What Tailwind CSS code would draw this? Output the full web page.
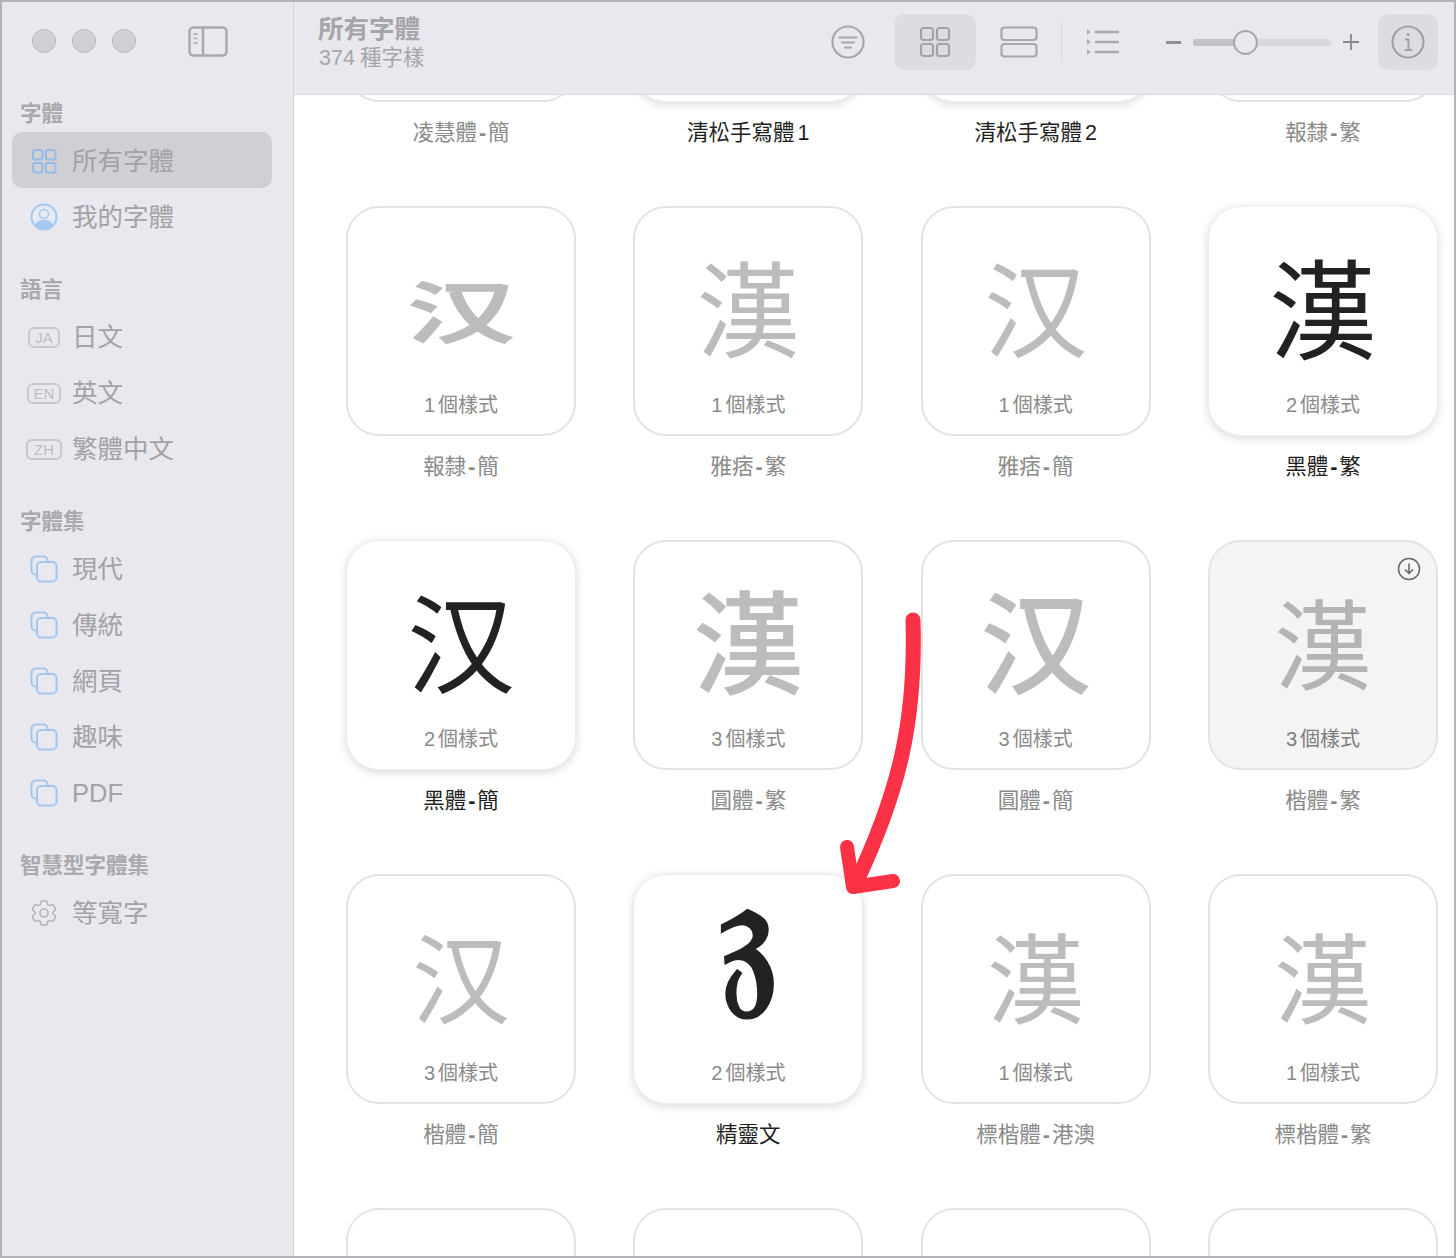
<!DOCTYPE html>
<html lang="zh-Hant">
<head>
<meta charset="UTF-8">
<title>字體</title>
<script src="https://cdn.jsdelivr.net/npm/@tailwindcss/browser@4"></script>
</head>
<body class="bg-white font-['Liberation_Sans','Noto_Sans_CJK_TC',sans-serif]">
<div class="relative flex h-[1258px] w-[1456px] overflow-hidden border-2 border-[#b2b2b8] bg-white">

  <!-- sidebar -->
  <aside class="w-[292px] shrink-0 border-r border-[#d2d2d7] bg-[#e8e8ee] text-[#a2a2a7]">
    <div class="flex h-[90px] items-start pl-[30px] pt-[27px]">
      <span class="size-6 rounded-full border border-[#b6b6bb] bg-[#d0d0d5]"></span>
      <span class="ml-4 size-6 rounded-full border border-[#b6b6bb] bg-[#d0d0d5]"></span>
      <span class="ml-4 size-6 rounded-full border border-[#b6b6bb] bg-[#d0d0d5]"></span>
      <svg class="ml-[52px] -mt-[3px] h-[31px] w-[40px]" viewBox="0 0 40 31" fill="none" stroke="#a8a8ad" stroke-width="2.4">
        <rect x="1.5" y="1.5" width="37" height="28" rx="4"/><path d="M15 1.5v28"/>
        <path d="M5.5 8h4M5.5 12.500h4M5.500 17h4" stroke-width="1.600"/>
      </svg>
    </div>

    <h2 class="flex h-10 items-center pl-[18px] pt-[4px] text-[21.500px] font-bold text-[#a9a9ae]">字體</h2>
    <div class="mx-[10px] mb-px flex h-14 w-[260px] items-center rounded-[10px] bg-[#cfcfd4] pl-1 pt-[2px] text-[25.500px]">
      <span class="flex w-14 justify-center">
        <svg class="size-[26px]" viewBox="0 0 26 26" fill="none" stroke="#94bbe8" stroke-width="2"><rect x="2" y="2" width="9.500" height="9.500" rx="2"/><rect x="15" y="2" width="9.500" height="9.500" rx="2"/><rect x="2" y="15" width="9.500" height="9.500" rx="2"/><rect x="15" y="15" width="9.500" height="9.500" rx="2"/></svg>
      </span>所有字體
    </div>
    <div class="mx-[10px] mb-6 flex h-14 w-[260px] items-center pl-1 text-[25.500px]">
      <span class="flex w-14 justify-center">
        <svg class="size-[28px]" viewBox="0 0 28 28"><circle cx="14" cy="14" r="12.500" fill="#e6ebf3" stroke="#a3c9f1" stroke-width="2"/><circle cx="14" cy="11" r="4.500" fill="#e6ebf3" stroke="#a3c9f1" stroke-width="1.500"/><path d="M5 22c2-4 5-5 9-5s7 1 9 5c-2 3-5.500 5-9 5s-7-2-9-5z" fill="#a3c9f1"/></svg>
      </span>我的字體
    </div>

    <h2 class="flex h-10 items-center pl-[18px] pt-[2px] text-[21.500px] font-bold text-[#a9a9ae]">語言</h2>
    <div class="mx-[10px] flex h-14 items-center pl-1 text-[25.500px]">
      <span class="flex w-14 justify-center"><span class="flex h-[21px] w-8 items-center justify-center rounded-[6px] border-2 border-[#c8c8cd] text-[15px] leading-none text-[#bdbdc2]">JA</span></span>日文
    </div>
    <div class="mx-[10px] flex h-14 items-center pl-1 text-[25.500px]">
      <span class="flex w-14 justify-center"><span class="flex h-[21px] w-[34px] items-center justify-center rounded-[6px] border-2 border-[#c8c8cd] text-[15px] leading-none text-[#bdbdc2]">EN</span></span>英文
    </div>
    <div class="mx-[10px] mb-6 flex h-14 items-center pl-1 text-[25.500px]">
      <span class="flex w-14 justify-center"><span class="flex h-[21px] w-[36px] items-center justify-center rounded-[6px] border-2 border-[#c8c8cd] text-[15px] leading-none text-[#bdbdc2]">ZH</span></span>繁體中文
    </div>

    <h2 class="flex h-10 items-center pl-[18px] pt-[2px] text-[21.500px] font-bold text-[#a9a9ae]">字體集</h2>
    <div class="mx-[10px] flex h-14 items-center pl-1 text-[25.500px]">
      <span class="flex w-14 justify-center"><svg class="size-[28px]" viewBox="0 0 28 28" fill="none" stroke="#a3c7ef" stroke-width="2"><path d="M6 19.500h-.500a4 4 0 0 1-4-4V5.500a4 4 0 0 1 4-4h8a4 4 0 0 1 4 4V6"/><rect x="7" y="7" width="19.500" height="19.500" rx="4"/></svg></span>現代
    </div>
    <div class="mx-[10px] flex h-14 items-center pl-1 text-[25.500px]">
      <span class="flex w-14 justify-center"><svg class="size-[28px]" viewBox="0 0 28 28" fill="none" stroke="#a3c7ef" stroke-width="2"><path d="M6 19.500h-.500a4 4 0 0 1-4-4V5.500a4 4 0 0 1 4-4h8a4 4 0 0 1 4 4V6"/><rect x="7" y="7" width="19.500" height="19.500" rx="4"/></svg></span>傳統
    </div>
    <div class="mx-[10px] flex h-14 items-center pl-1 text-[25.500px]">
      <span class="flex w-14 justify-center"><svg class="size-[28px]" viewBox="0 0 28 28" fill="none" stroke="#a3c7ef" stroke-width="2"><path d="M6 19.500h-.500a4 4 0 0 1-4-4V5.500a4 4 0 0 1 4-4h8a4 4 0 0 1 4 4V6"/><rect x="7" y="7" width="19.500" height="19.500" rx="4"/></svg></span>網頁
    </div>
    <div class="mx-[10px] flex h-14 items-center pl-1 text-[25.500px]">
      <span class="flex w-14 justify-center"><svg class="size-[28px]" viewBox="0 0 28 28" fill="none" stroke="#a3c7ef" stroke-width="2"><path d="M6 19.500h-.500a4 4 0 0 1-4-4V5.500a4 4 0 0 1 4-4h8a4 4 0 0 1 4 4V6"/><rect x="7" y="7" width="19.500" height="19.500" rx="4"/></svg></span>趣味
    </div>
    <div class="mx-[10px] mb-6 flex h-14 items-center pl-1 text-[25.500px]">
      <span class="flex w-14 justify-center"><svg class="size-[28px]" viewBox="0 0 28 28" fill="none" stroke="#a3c7ef" stroke-width="2"><path d="M6 19.500h-.500a4 4 0 0 1-4-4V5.500a4 4 0 0 1 4-4h8a4 4 0 0 1 4 4V6"/><rect x="7" y="7" width="19.500" height="19.500" rx="4"/></svg></span>PDF
    </div>

    <h2 class="flex h-10 items-center pl-[18px] pt-[2px] text-[21.500px] font-bold text-[#a9a9ae]">智慧型字體集</h2>
    <div class="mx-[10px] flex h-14 items-center pl-1 text-[25.500px]">
      <span class="flex w-14 justify-center"><svg class="size-[32px]" viewBox="0 0 24 24" fill="none" stroke="#b4b4b9" stroke-width="1.200"><path d="M9.594 3.940c.09-.542.56-.94 1.110-.94h2.593c.55 0 1.020.398 1.110.94l.213 1.281c.063.374.313.686.645.870.074.040.147.083.22.127.325.196.72.257 1.075.124l1.217-.456a1.125 1.125 0 0 1 1.370.49l1.296 2.247a1.125 1.125 0 0 1-.26 1.431l-1.003.827c-.293.241-.438.613-.43.992a7.723 7.723 0 0 1 0 .255c-.008.378.137.75.43.991l1.004.827c.424.35.534.955.26 1.430l-1.298 2.247a1.125 1.125 0 0 1-1.369.491l-1.217-.456c-.355-.133-.75-.072-1.076.124a6.470 6.470 0 0 1-.22.128c-.331.183-.581.495-.644.869l-.213 1.281c-.09.543-.56.94-1.110.94h-2.594c-.55 0-1.019-.398-1.110-.94l-.213-1.281c-.062-.374-.312-.686-.644-.87a6.520 6.520 0 0 1-.22-.127c-.325-.196-.72-.257-1.076-.124l-1.217.456a1.125 1.125 0 0 1-1.369-.49l-1.297-2.247a1.125 1.125 0 0 1 .26-1.431l1.004-.827c.292-.24.437-.613.43-.991a6.932 6.932 0 0 1 0-.255c.007-.38-.138-.751-.43-.992l-1.004-.827a1.125 1.125 0 0 1-.26-1.430l1.297-2.247a1.125 1.125 0 0 1 1.370-.491l1.216.456c.356.133.751.072 1.076-.124.072-.044.146-.086.22-.128.332-.183.582-.495.644-.869l.214-1.280Z"/><circle cx="12" cy="12" r="3"/></svg></span>等寬字
    </div>
  </aside>

  <div class="flex min-w-0 flex-1 flex-col">
    <!-- toolbar -->
    <header class="z-10 flex h-[93px] shrink-0 items-start justify-between border-b border-[#d9d9de] bg-[#e8e8ee] pl-6 pr-4 pt-3">
      <div class="text-[#a5a5aa]">
        <div class="h-[30px] text-[25.500px] font-bold leading-[30px]">所有字體</div>
        <div class="flex h-7 items-center text-[21.500px] leading-7"><span class="mr-[5px] ml-px">374</span>種字樣</div>
      </div>
      <div class="flex h-14 items-center">
        <svg class="size-[34px]" viewBox="0 0 34 34" fill="none" stroke="#a6a6ab" stroke-width="2.200"><circle cx="17" cy="17" r="15.500"/><path d="M8.500 12.500h17M11 17.500h12M14 22.500h6" stroke-linecap="round"/></svg>
        <span class="ml-[29px] flex h-14 w-[82px] items-center justify-center rounded-[10px] bg-[#dcdce1]">
          <svg class="size-[32px]" viewBox="0 0 32 32" fill="none" stroke="#a2a2a7" stroke-width="2.200"><rect x="2" y="2" width="12" height="12" rx="2.500"/><rect x="18" y="2" width="12" height="12" rx="2.500"/><rect x="2" y="18" width="12" height="12" rx="2.500"/><rect x="18" y="18" width="12" height="12" rx="2.500"/></svg>
        </span>
        <svg class="ml-6 h-[32px] w-[38px]" viewBox="0 0 38 32" fill="none" stroke="#a6a6ab" stroke-width="2.200"><rect x="1.500" y="1.500" width="35" height="12.500" rx="3"/><rect x="1.500" y="18" width="35" height="12.500" rx="3"/></svg>
        <span class="ml-[23px] h-10 w-px bg-[#d7d7dc]"></span>
        <svg class="ml-6 h-[28px] w-[34px]" viewBox="0 0 34 28" fill="#b0b0b5"><path d="M1 1l4 3-4 3zM1 11l4 3-4 3zM1 21l4 3-4 3z"/><path d="M9 4h24M9 14h24M9 24h24" stroke="#a8a8ad" stroke-width="2.400" fill="none"/></svg>
        <span class="ml-[46px] h-[3px] w-[15px] bg-[#8f8f94]"></span>
        <span class="relative ml-3 h-[7px] w-[138px] rounded-full bg-[#d8d8dd]">
          <span class="absolute left-0 top-0 h-[7px] w-[42px] rounded-l-full bg-[#c2c2c7]"></span>
          <span class="absolute left-[40px] top-[-9px] size-[25px] rounded-full border-2 border-[#a8a8ad] bg-[#e8e8ee]"></span>
        </span>
        <svg class="ml-3 size-4" viewBox="0 0 16 16" stroke="#88888d" stroke-width="1.800"><path d="M0 8h16M8 0v16"/></svg>
        <span class="ml-[19px] flex h-14 w-[60px] items-center justify-center rounded-[10px] bg-[#dcdce1]">
          <svg class="size-[34px]" viewBox="0 0 34 34" fill="none" stroke="#a2a2a7" stroke-width="2.200"><circle cx="17" cy="17" r="15.500"/><circle cx="17" cy="9.500" r="1.500" fill="#a2a2a7" stroke="none"/><path d="M14 14.500h3.500v10M13.500 25h8" stroke-width="2"/></svg>
        </span>
      </div>
    </header>

    <!-- font grid, scrolled so the first row is cut off by the toolbar -->
    <main class="min-h-0 flex-1 overflow-hidden">
      <div class="-mt-[223px] ml-[52px] grid grid-cols-[repeat(4,230px)] gap-x-[57.330px] gap-y-[42px] text-center">

        <div><div class="h-[230px] rounded-[33px] border-2 border-[#e3e3e3] bg-white"></div><div class="flex h-[62px] items-center justify-center text-[21.500px] text-[#8a8a8a]">凌慧體<span class="mx-[2px] font-bold">-</span>簡</div></div>
        <div><div class="h-[230px] rounded-[33px] border border-[#eeeeee] bg-white shadow-[0_2px_10px_rgba(0,0,0,0.16)]"></div><div class="flex h-[62px] items-center justify-center text-[21.500px] text-[#1f1f1f]">清松手寫體<span class="ml-[3px]">1</span></div></div>
        <div><div class="h-[230px] rounded-[33px] border border-[#eeeeee] bg-white shadow-[0_2px_10px_rgba(0,0,0,0.16)]"></div><div class="flex h-[62px] items-center justify-center text-[21.500px] text-[#1f1f1f]">清松手寫體<span class="ml-[3px]">2</span></div></div>
        <div><div class="h-[230px] rounded-[33px] border-2 border-[#e3e3e3] bg-white"></div><div class="flex h-[62px] items-center justify-center text-[21.500px] text-[#8a8a8a]">報隸<span class="mx-[2px] font-bold">-</span>繁</div></div>

        <div>
          <div class="flex h-[230px] flex-col items-center rounded-[33px] border-2 border-[#e3e3e3] bg-white pt-[35px]">
            <div class="flex h-[142px] scale-y-[0.62] items-center text-[110px] font-bold leading-none text-[#bcbcbc]">汉</div>
            <div class="flex h-10 items-center text-[20px] text-[#8a8a8a]"><span class="mr-[3px]">1</span>個樣式</div>
          </div>
          <div class="flex h-[62px] items-center justify-center text-[21.500px] text-[#8a8a8a]">報隸<span class="mx-[2px] font-bold">-</span>簡</div>
        </div>
        <div>
          <div class="flex h-[230px] flex-col items-center rounded-[33px] border-2 border-[#e3e3e3] bg-white pt-[35px]">
            <div class="flex h-[142px] items-center text-[104px] leading-none text-[#bcbcbc]">漢</div>
            <div class="flex h-10 items-center text-[20px] text-[#8a8a8a]"><span class="mr-[3px]">1</span>個樣式</div>
          </div>
          <div class="flex h-[62px] items-center justify-center text-[21.500px] text-[#8a8a8a]">雅痞<span class="mx-[2px] font-bold">-</span>繁</div>
        </div>
        <div>
          <div class="flex h-[230px] flex-col items-center rounded-[33px] border-2 border-[#e3e3e3] bg-white pt-[35px]">
            <div class="flex h-[142px] items-center text-[104px] leading-none text-[#bcbcbc]">汉</div>
            <div class="flex h-10 items-center text-[20px] text-[#8a8a8a]"><span class="mr-[3px]">1</span>個樣式</div>
          </div>
          <div class="flex h-[62px] items-center justify-center text-[21.500px] text-[#8a8a8a]">雅痞<span class="mx-[2px] font-bold">-</span>簡</div>
        </div>
        <div>
          <div class="flex h-[230px] flex-col items-center rounded-[33px] border border-[#eeeeee] bg-white pt-[36px] shadow-[0_2px_10px_rgba(0,0,0,0.16)]">
            <div class="flex h-[142px] items-center text-[108px] leading-none text-[#222222]">漢</div>
            <div class="flex h-10 items-center text-[20px] text-[#8a8a8a]"><span class="mr-[3px]">2</span>個樣式</div>
          </div>
          <div class="flex h-[62px] items-center justify-center text-[21.500px] text-[#1f1f1f]">黑體<span class="mx-[2px] font-bold">-</span>繁</div>
        </div>

        <div>
          <div class="flex h-[230px] flex-col items-center rounded-[33px] border border-[#eeeeee] bg-white pt-[36px] shadow-[0_2px_10px_rgba(0,0,0,0.16)]">
            <div class="flex h-[142px] items-center text-[108px] leading-none text-[#222222]">汉</div>
            <div class="flex h-10 items-center text-[20px] text-[#8a8a8a]"><span class="mr-[3px]">2</span>個樣式</div>
          </div>
          <div class="flex h-[62px] items-center justify-center text-[21.500px] text-[#1f1f1f]">黑體<span class="mx-[2px] font-bold">-</span>簡</div>
        </div>
        <div>
          <div class="flex h-[230px] flex-col items-center rounded-[33px] border-2 border-[#e3e3e3] bg-white pt-[35px]">
            <div class="flex h-[142px] items-center text-[112px] font-medium leading-none text-[#bcbcbc]">漢</div>
            <div class="flex h-10 items-center text-[20px] text-[#8a8a8a]"><span class="mr-[3px]">3</span>個樣式</div>
          </div>
          <div class="flex h-[62px] items-center justify-center text-[21.500px] text-[#8a8a8a]">圓體<span class="mx-[2px] font-bold">-</span>繁</div>
        </div>
        <div>
          <div class="flex h-[230px] flex-col items-center rounded-[33px] border-2 border-[#e3e3e3] bg-white pt-[35px]">
            <div class="flex h-[142px] items-center text-[112px] font-medium leading-none text-[#bcbcbc]">汉</div>
            <div class="flex h-10 items-center text-[20px] text-[#8a8a8a]"><span class="mr-[3px]">3</span>個樣式</div>
          </div>
          <div class="flex h-[62px] items-center justify-center text-[21.500px] text-[#8a8a8a]">圓體<span class="mx-[2px] font-bold">-</span>簡</div>
        </div>
        <div>
          <div class="relative flex h-[230px] flex-col items-center rounded-[33px] border-2 border-[#e3e3e3] bg-[#f4f4f4] pt-[35px]">
            <svg class="absolute right-[15px] top-[15px] size-[24px]" viewBox="0 0 24 24" fill="none" stroke="#666666" stroke-width="1.500"><circle cx="12" cy="12" r="10.500"/><path d="M12 6.500v10M8 12.500l4 4 4-4"/></svg>
            <div class="flex h-[142px] items-center text-[98px] leading-none text-[#b4b4b4]">漢</div>
            <div class="flex h-10 items-center text-[20px] text-[#7d7d7d]"><span class="mr-[3px]">3</span>個樣式</div>
          </div>
          <div class="flex h-[62px] items-center justify-center text-[21.500px] text-[#8a8a8a]">楷體<span class="mx-[2px] font-bold">-</span>繁</div>
        </div>

        <div>
          <div class="flex h-[230px] flex-col items-center rounded-[33px] border-2 border-[#e3e3e3] bg-white pt-[35px]">
            <div class="flex h-[142px] items-center text-[98px] leading-none text-[#bcbcbc]">汉</div>
            <div class="flex h-10 items-center text-[20px] text-[#8a8a8a]"><span class="mr-[3px]">3</span>個樣式</div>
          </div>
          <div class="flex h-[62px] items-center justify-center text-[21.500px] text-[#8a8a8a]">楷體<span class="mx-[2px] font-bold">-</span>簡</div>
        </div>
        <div>
          <div class="flex h-[230px] flex-col items-center rounded-[33px] border border-[#eeeeee] bg-white pt-[36px] shadow-[0_2px_10px_rgba(0,0,0,0.16)]">
            <div class="flex h-[142px] items-center pb-[96px] font-['DejaVu_Sans',serif] text-[165px] font-bold leading-none text-[#222222]">𝔷</div>
            <div class="flex h-10 items-center text-[20px] text-[#8a8a8a]"><span class="mr-[3px]">2</span>個樣式</div>
          </div>
          <div class="flex h-[62px] items-center justify-center text-[21.500px] text-[#1f1f1f]">精靈文</div>
        </div>
        <div>
          <div class="flex h-[230px] flex-col items-center rounded-[33px] border-2 border-[#e3e3e3] bg-white pt-[35px]">
            <div class="flex h-[142px] items-center text-[98px] leading-none text-[#bcbcbc]">漢</div>
            <div class="flex h-10 items-center text-[20px] text-[#8a8a8a]"><span class="mr-[3px]">1</span>個樣式</div>
          </div>
          <div class="flex h-[62px] items-center justify-center text-[21.500px] text-[#8a8a8a]">標楷體<span class="mx-[2px] font-bold">-</span>港澳</div>
        </div>
        <div>
          <div class="flex h-[230px] flex-col items-center rounded-[33px] border-2 border-[#e3e3e3] bg-white pt-[35px]">
            <div class="flex h-[142px] items-center text-[98px] leading-none text-[#bcbcbc]">漢</div>
            <div class="flex h-10 items-center text-[20px] text-[#8a8a8a]"><span class="mr-[3px]">1</span>個樣式</div>
          </div>
          <div class="flex h-[62px] items-center justify-center text-[21.500px] text-[#8a8a8a]">標楷體<span class="mx-[2px] font-bold">-</span>繁</div>
        </div>

        <div class="h-[230px] rounded-[33px] border-2 border-[#e3e3e3] bg-white"></div>
        <div class="h-[230px] rounded-[33px] border-2 border-[#e3e3e3] bg-white"></div>
        <div class="h-[230px] rounded-[33px] border-2 border-[#e3e3e3] bg-white"></div>
        <div class="h-[230px] rounded-[33px] border-2 border-[#e3e3e3] bg-white"></div>
      </div>
    </main>
  </div>

  <!-- red annotation arrow -->
  <svg class="absolute left-[816px] top-[596px] h-[310px] w-[110px]" viewBox="0 0 110 310" fill="none" stroke="#fb3145" stroke-linecap="round" stroke-linejoin="round">
    <path d="M95 22C98 122 82 192 37 287" stroke-width="15"/>
    <path d="M29 249l6 40 40-6" stroke-width="14"/>
  </svg>
</div>
</body>
</html>
